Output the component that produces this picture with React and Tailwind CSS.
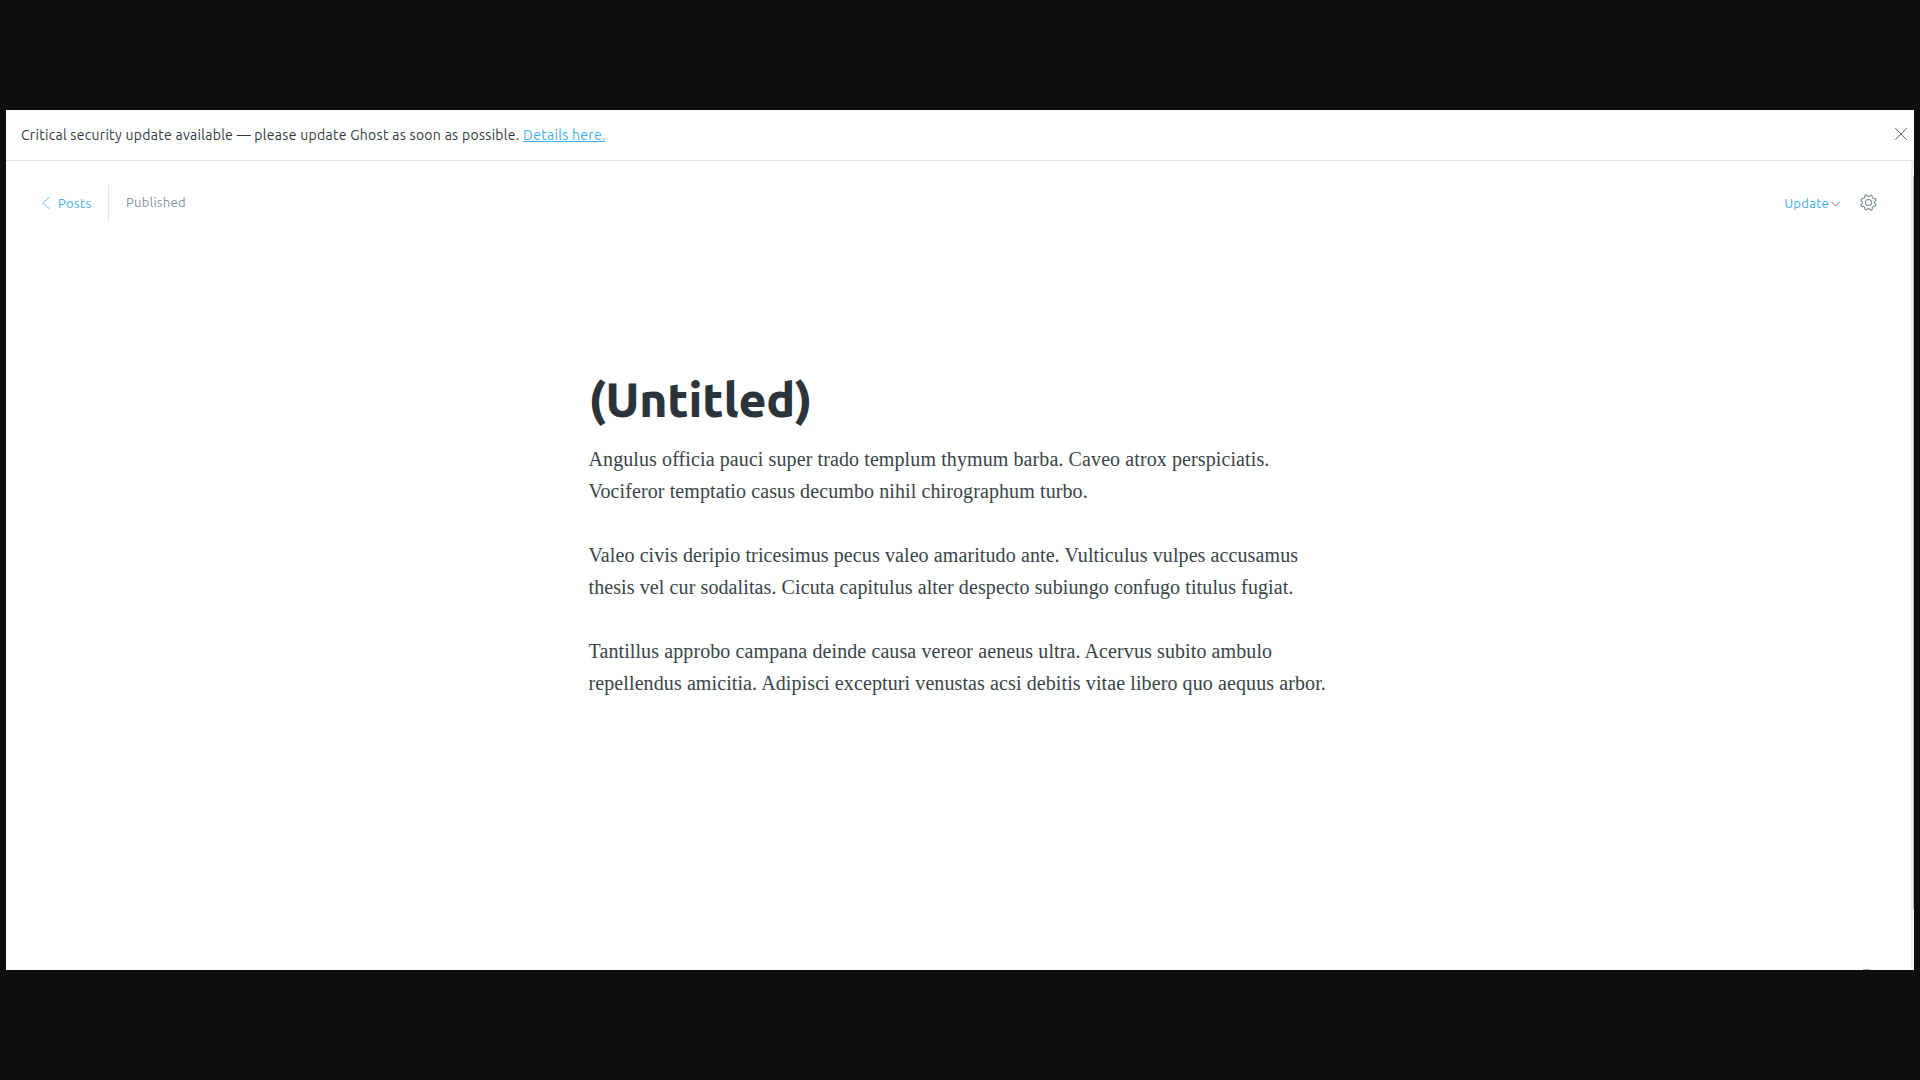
import React from "react";

const paragraphs = [
  ["Angulus officia pauci super trado templum thymum barba. Caveo atrox perspiciatis.", "Vociferor temptatio casus decumbo nihil chirographum turbo."],
  ["Valeo civis deripio tricesimus pecus valeo amaritudo ante. Vulticulus vulpes accusamus", "thesis vel cur sodalitas. Cicuta capitulus alter despecto subiungo confugo titulus fugiat."],
  ["Tantillus approbo campana deinde causa vereor aeneus ultra. Acervus subito ambulo", "repellendus amicitia. Adipisci excepturi venustas acsi debitis vitae libero quo aequus arbor."],
];

function CloseIcon() {
  return (
    <svg className="size-3" viewBox="0 0 12 12" fill="none" stroke="#4a5459" strokeWidth="0.9">
      <path d="M0.3 0.3 11.7 11.7M11.7 0.3 0.3 11.7" />
    </svg>
  );
}

function BackIcon() {
  return (
    <svg className="h-3 w-2" viewBox="0 0 8 12" fill="none" stroke="#3eb0ef" strokeWidth="0.8" strokeLinecap="round" strokeLinejoin="round">
      <path d="M7.4 0.4 0.6 6l6.8 5.6" />
    </svg>
  );
}

function ChevronIcon() {
  return (
    <svg className="mt-px h-[6px] w-[9px]" viewBox="0 0 9 6" fill="none" stroke="#5d7480" strokeWidth="0.9" strokeLinecap="round" strokeLinejoin="round">
      <path d="M0.5 0.8 4.5 5l4-4.2" />
    </svg>
  );
}

function GearIcon() {
  return (
    <svg className="size-[17px]" viewBox="0 0 24 24" fill="none" stroke="#738a94" strokeWidth="1.5" strokeLinecap="round" strokeLinejoin="round">
      <circle cx="12" cy="12" r="4.3" />
      <g transform="rotate(22.5 12 12)">
        <path d="M13.7 2.2a2.6 2.6 0 0 0 4 1.7 1.5 1.5 0 0 1 2.4 2.4 2.6 2.6 0 0 0 1.7 4 1.8 1.8 0 0 1 0 3.4 2.6 2.6 0 0 0-1.7 4 1.5 1.5 0 0 1-2.4 2.4 2.6 2.6 0 0 0-4 1.7 1.8 1.8 0 0 1-3.4 0 2.6 2.6 0 0 0-4-1.7 1.5 1.5 0 0 1-2.4-2.4 2.6 2.6 0 0 0-1.7-4 1.8 1.8 0 0 1 0-3.4 2.6 2.6 0 0 0 1.7-4 1.5 1.5 0 0 1 2.4-2.4 2.6 2.6 0 0 0 4-1.7 1.8 1.8 0 0 1 3.4 0Z" />
      </g>
    </svg>
  );
}

export default function App() {
  return (
    <div className="h-screen overflow-hidden bg-[#0e0e0e] px-1.5 py-[110px] font-['Ubuntu','Noto_Sans',sans-serif]">
      <div className="flex h-[860px] flex-col overflow-hidden bg-white">
        <div className="flex h-[51px] shrink-0 items-center justify-between border-b border-[#dfe1e3] pr-[7px] pl-[15px]">
          <p className="text-[14px] leading-5 tracking-[0.29px] whitespace-nowrap text-[#2f3a3f]">
            Critical security update available — please update Ghost as soon as possible.{" "}
            <a className="text-[#3eb0ef] underline" href="#">Details here.</a>
          </p>
          <button className="mb-[2px] block" aria-label="Close"><CloseIcon /></button>
        </div>
        <div className="flex min-h-0 flex-1">
          <div className="flex flex-1 flex-col justify-between">
            <header className="flex h-[84px] items-center justify-between pr-[34px] pl-9">
              <div className="flex items-center text-[13px] whitespace-nowrap">
                <div className="flex w-[66px] items-center"><a className="flex items-center gap-2 tracking-[0.4px] text-[#3eb0ef]" href="#"><BackIcon /><span className="pt-px">Posts</span></a></div>
                <div className="flex h-9 items-center border-l border-[#dfe9ef] pl-[17px] tracking-[0.3px] text-[#7d939e]"><span>Published</span></div>
              </div>
              <div className="flex items-center text-[13px] text-[#3eb0ef]">
                <button className="flex items-center gap-[2px] tracking-[0.3px]"><span className="pt-px">Update</span><ChevronIcon /></button>
                <button className="mb-px ml-5" aria-label="Settings"><GearIcon /></button>
              </div>
            </header>
            <main className="mt-[122px] ml-[582.5px] w-[760px] flex-1 whitespace-nowrap">
              <h1 className="h-[76px] text-[48px] leading-[64px] font-extrabold tracking-[-0.15px] text-[#2b343a]"><span>(Untitled)</span></h1>
              {paragraphs.map((lines) => (
                <p key={lines[0]} className="mb-8 font-['Liberation_Serif',serif] text-[20px] leading-8 tracking-[0.1px] text-[#394449]">
                  <span>{lines[0]}</span><br /><span>{lines[1]}</span>
                </p>
              ))}
            </main>
            <div className="mr-[41px] h-px w-[7px] self-end bg-[#a5b3ba]" />
          </div>
          <div className="w-[3px] bg-[#f0f0f0] pt-[15px]"><div className="ml-auto h-[733px] w-px bg-[#b4b4b4]" /></div>
        </div>
      </div>
    </div>
  );
}
